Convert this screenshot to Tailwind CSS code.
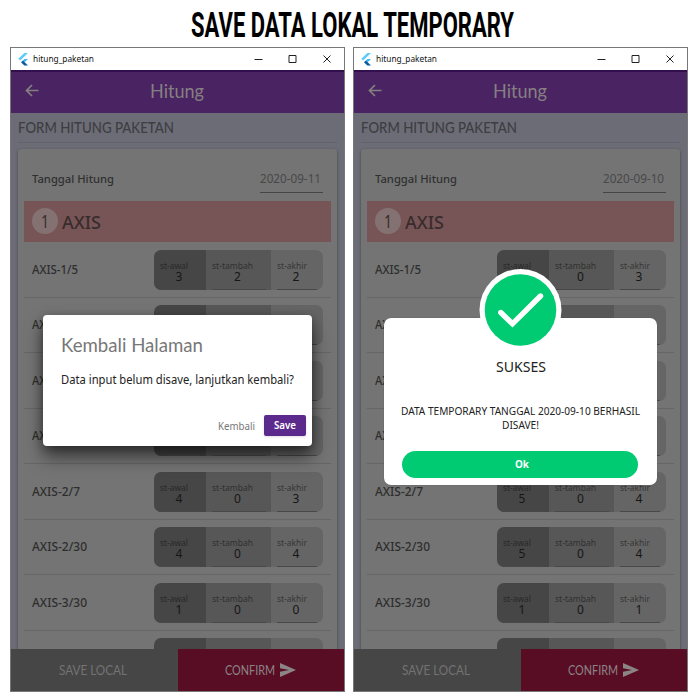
<!DOCTYPE html>
<html lang="id">
<head>
<meta charset="utf-8">
<title>Save Data Lokal Temporary</title>
<script src="https://cdn.jsdelivr.net/npm/@tailwindcss/browser@4"></script>
</head>
<body class="w-[700px] h-[700px] overflow-hidden bg-white font-['Noto_Sans','Open_Sans',sans-serif]">
<h1 class="h-[47px] pl-[191px] pt-[4px] text-[35px] leading-[43px] font-bold text-black font-['Roboto',sans-serif]"><span data-w="323">SAVE DATA LOKAL TEMPORARY</span></h1>
<main id="windows" class="flex gap-[8px] pl-[10px]"></main>

<script>
const tile = (label, value, box, text, left, mid, line) => `
  <div class="${box} relative h-[40px] pt-[11px]">
    <div class="${text} ${left} h-[10px] leading-[10px] text-[9px]">${value === '' ? '' : `<span data-w="${label[1]}">${label[0]}</span>`}</div>
    <div class="${mid} -mt-px text-center text-[12px] leading-[13px] text-[#161616]">${value}</div>
    <i class="${line} absolute bottom-0 h-px bg-[#484848]"></i>
  </div>`;

const row = ([name, w, a, b, c]) => `
  <div class="h-[55.5px] pt-[7.5px] flex pl-[8px] border-b border-[#666] justify-between">
    <div class="h-[40px] leading-[40px] text-[12.5px] font-medium text-[#2e2e2e]">${name ? `<span data-w="${w}">${name}</span>` : ''}</div>
    <div class="flex w-[169px] h-[40px] mr-[8px] rounded-[7px] overflow-hidden">
      ${tile(['st-awal', 28], a, 'w-[52px] bg-[#464646]', 'text-[#292929]', 'pl-[6px]', 'w-[50px]', 'left-[5px] w-[41px]')}
      ${tile(['st-tambah', 41], b, 'w-[65px] bg-[#575757]', 'text-[#303030]', 'pl-[6px]', 'w-[63px]', 'left-[6px] w-[54px]')}
      ${tile(['st-akhir', 30], c, 'w-[52px] bg-[#656565]', 'text-[#363636]', 'pl-[6px]', 'w-[50px]', 'left-[6px] w-[40px]')}
    </div>
  </div>`;

const confirmDialog = `
  <section class="absolute left-[32px] top-[267px] w-[269px] h-[131px] rounded-[4px] bg-white shadow-[0_11px_18px_rgba(0,0,0,.5),0_3px_10px_rgba(0,0,0,.3)] pl-[18px] pr-[6px] pt-[17px]">
    <h2 class="h-[26px] leading-[26px] text-[19px] text-[#777] font-['Lato',sans-serif]"><span data-w="142">Kembali Halaman</span></h2>
    <p class="mt-[13px] h-[18px] leading-[18px] text-[12px] text-[#222]"><span data-w="233">Data input belum disave, lanjutkan kembali?</span></p>
    <div class="mt-[26px] flex justify-end items-center h-[21px]">
      <span class="mr-[9px] h-[21px] leading-[22px] text-[10.5px] text-[#777]"><span data-w="37">Kembali</span></span>
      <button class="w-[42px] h-[21px] rounded-[2px] bg-[#5c2a8d] text-white text-[10.5px] leading-[21px] font-semibold shadow-sm"><span data-w="22">Save</span></button>
    </div>
  </section>`;

const successDialog = `
  <section class="absolute left-[30px] top-[270px] w-[273px] h-[167px] rounded-[7px] bg-white pt-[38px] text-center shadow-[0_0_1px_#444]">
    <svg class="absolute left-[95px] top-[-49px]" width="83" height="83" viewBox="0 0 83 83">
      <circle cx="41.500" cy="41" r="41" fill="#fff"/>
      <circle cx="41.500" cy="41" r="35.800" fill="#00cb72"/>
      <path d="M21.800 43.500 33.500 54.800 61.500 27" fill="none" stroke="#fff" stroke-width="5.400" stroke-linecap="round"/>
    </svg>
    <h2 class="h-[22px] leading-[22px] text-[14px] text-[#222]"><span data-w="50">SUKSES</span></h2>
    <p class="mt-[26px] text-[10.5px] leading-[14px] text-[#222]"><span data-w="239">DATA TEMPORARY TANGGAL 2020-09-10 BERHASIL</span><br><span data-w="37">DISAVE!</span></p>
    <button class="ml-[18px] mt-[19px] block w-[236px] h-[27px] rounded-full bg-[#00cb72] text-white text-[10.5px] leading-[27px] pl-[3px] font-bold font-['Open_Sans','Noto_Sans',sans-serif]"><span data-w="14">Ok</span></button>
  </section>`;

const appWindow = (date, rows, dialog) => `
<article class="relative w-[335px] h-[645px] border border-[#777] bg-[#6c6c76] flex flex-col overflow-hidden">
  <header class="h-[22px] shrink-0 bg-white flex items-center pl-[7px] text-[#111]">
    <svg width="10" height="13" viewBox="0 0 10 13"><path d="M6.400 0H10L2.200 7.600.300 5.800z" fill="#5ecbfa"/><path d="M6.400 6H10L6.700 9.200 4.800 7.500z" fill="#42b6f4"/><path d="M3 9.200 4.900 7.400 10 12.500H6.300z" fill="#075b9d"/></svg>
    <span class="ml-[5px] h-[16px] leading-[16px] text-[9.5px]"><span data-w="61">hitung_paketan</span></span>
    <svg class="ml-auto mr-[11px]" width="80" height="12" viewBox="0 0 80 12" fill="none" stroke="#222"><path d="M1.500 6.500h8M36 2.500h7v7h-7zM70.500 2.500l7 7m0-7-7 7"/></svg>
  </header>
  <nav class="relative h-[43px] shrink-0 bg-[#4a2363] border-t-2 border-[#32104e] text-center text-[#858080] pt-[6px]">
    <svg class="absolute left-[14px] top-[12px]" width="14" height="13" viewBox="0 0 14 13" fill="none" stroke="#858080" stroke-width="1.700"><path d="M13.500 6.500H2M7 1 1.500 6.500 7 12"/></svg>
    <h2 class="h-[26px] leading-[26px] pr-[2px] text-[18.5px] font-['Lato',sans-serif]"><span data-w="54">Hitung</span></h2>
  </nav>
  <div class="h-[536px] shrink-0 overflow-hidden px-[7px]">
    <h3 class="h-[30px] leading-[30px] text-[14.5px] text-[#3d3d42] border-b border-[#62626e] font-medium font-['Lato',sans-serif]"><span data-w="156">FORM HITUNG PAKETAN</span></h3>
    <div class="mt-[6px] w-[319px] h-[520px] rounded-[3px] bg-[#747474] shadow-[0_1px_3px_rgba(0,0,0,.4)] px-[6px]">
      <div class="h-[51.5px] px-[8px] flex justify-between">
        <span class="pt-[20px] h-[40px] leading-[20px] text-[11.5px] font-medium text-[#303030]"><span data-w="82">Tanggal Hitung</span></span>
        <span class="mt-[20px] h-[24px] w-[63px] border-b border-[#454545] leading-[20px] text-[12px] text-[#484848]"><span data-w="61">${date}</span></span>
      </div>
      <div class="w-[307px] h-[41.500px] bg-[#775557] flex items-center pl-[8px]">
        <span class="size-[26px] rounded-full bg-[#847272] text-center leading-[27px] text-[18px] text-[#382c2c]"><span data-w="8">1</span></span>
        <span class="ml-[4px] h-[26px] leading-[27px] text-[18.5px] font-medium text-[#382c2c]"><span data-w="39">AXIS</span></span>
      </div>
      ${rows.map(row).join('')}
    </div>
  </div>
  <footer class="h-[42px] shrink-0 flex text-[13px] leading-[42px] font-['Lato',sans-serif]">
    <div class="w-[167px] pr-[3px] bg-[#464646] text-center text-[#737373]"><span data-w="68">SAVE LOCAL</span></div>
    <div class="w-[166px] pr-[2px] bg-[#590d25] flex items-center justify-center text-[#8b8586] gap-[5px]"><span><span data-w="50">CONFIRM</span></span>
      <svg width="16" height="14" viewBox="0 0 16 14"><path d="M0 0 16 7 0 14V8.700L9 7 0 5.300z" fill="#8b8586"/></svg>
    </div>
  </footer>
  ${dialog}
</article>`;

document.getElementById('windows').innerHTML =
  appWindow('2020-09-11', [
    ['AXIS-1/5', 46, 3, 2, 2], ['AX', 14, '', '', ''], ['AX', 14, '', '', ''], ['AX', 14, '', '', ''],
    ['AXIS-2/7', 48, 4, 0, 3], ['AXIS-2/30', 55, 4, 0, 4], ['AXIS-3/30', 55, 1, 0, 0], ['', 0, '', '', '']
  ], confirmDialog) +
  appWindow('2020-09-10', [
    ['AXIS-1/5', 46, 3, 0, 3], ['AX', 14, '', '', ''], ['AX', 14, '', '', ''], ['AX', 14, '', '', ''],
    ['AXIS-2/7', 48, 5, 0, 4], ['AXIS-2/30', 55, 5, 0, 4], ['AXIS-3/30', 55, 1, 0, 1], ['', 0, '', '', '']
  ], successDialog);

// Scale each label horizontally to its intended width, again whenever its own size changes.
const fit = new ResizeObserver(entries => entries.forEach(({ target, contentRect }) => {
  const natural = contentRect.width, w = +target.dataset.w;
  if (!natural) return;
  target.style.transform = `scaleX(${w / natural})`;
  target.style.marginRight = `${w - natural}px`;
}));
document.querySelectorAll('[data-w]').forEach(el => {
  el.style.cssText = 'display:inline-block;white-space:nowrap;transform-origin:left';
  fit.observe(el);
});
</script>
</body>
</html>
